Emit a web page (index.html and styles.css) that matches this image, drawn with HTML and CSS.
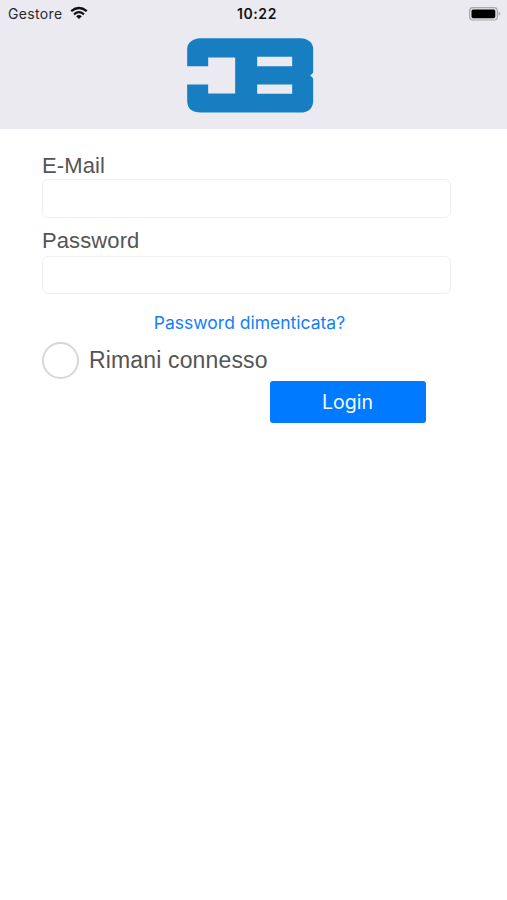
FILE: index.html
```html
<!DOCTYPE html>
<html lang="it">
<head>
<meta charset="utf-8">
<title>Login</title>
<link rel="stylesheet" href="styles.css">
</head>
<body>
<header class="header">
  <div class="status">
    <div class="carrier"><span class="carrier-name">Gestore</span>
      <svg class="wifi" width="18" height="14" viewBox="0 0 18 14" fill="none" stroke="#111" stroke-width="2.2"><path d="M1.2 5.2Q9-1.2 16.8 5.2M4 8.3Q9 4.1 14 8.3"/><path d="M6.1 10.2Q9 8 11.9 10.2L9 13Z" fill="#111" stroke="none"/></svg>
    </div>
    <span class="time">10:22</span>
    <svg class="battery" width="32" height="14" viewBox="0 0 32 14"><rect x=".6" y=".6" width="27.8" height="12.4" rx="3.2" fill="#e4e3e8" stroke="#aaa9ad" stroke-width="1.2"/><rect x="2.5" y="2.4" width="23.8" height="8.8" rx="1.6" fill="#000"/><path d="M29.7 4.8Q31.3 5.3 31.3 6.8T29.7 8.8Z" fill="#aaa9ad"/></svg>
  </div>
  <svg class="logo" width="127" height="75" viewBox="35.5 22.5 381 225"><path fill="#177fc1" fill-rule="evenodd" d="M36 107V56Q36 42 46 34Q58 23 76 23H375Q393 23 404 33Q414 42 414 56V122Q414 128 411 130L405 135L411 140Q414 142 414 148V211Q414 227 405 236Q394 246 375 246H76Q58 246 46 237Q36 228 36 211V162H99V189H180V81H99V107ZM246 79V107H351V79ZM246 162V190H351V162Z"/></svg>
</header>
<main class="form">
  <label class="label" for="email">E-Mail</label>
  <input class="field" id="email" type="email">
  <label class="label label-password" for="password">Password</label>
  <input class="field" id="password" type="password">
  <a class="forgot">Password dimenticata?</a>
  <div class="remember"><span class="radio"></span><span class="remember-text">Rimani connesso</span></div>
  <button class="login" type="button">Login</button>
</main>
</body>
</html>
```
FILE: styles.css
```css
* { box-sizing: border-box; }
body { margin: 0; background: #fff; color: #555; font-family: "Liberation Sans", Arial, sans-serif; }
.header { height: 129px; background: #ebeaf1; }
.status { display: grid; grid-template-columns: 1fr auto 1fr; align-items: center; height: 26px; padding: 0 6px 0 8px; color: #111; font-family: Inter, sans-serif; }
.carrier { display: flex; align-items: center; gap: 7px; }
.carrier-name { font-size: 14px; letter-spacing: .35px; color: #29292b; }
.wifi { margin-top: -1px; }
.time { font-size: 14px; font-weight: 600; letter-spacing: .6px; margin-left: 5px; }
.battery { justify-self: end; margin-top: 1px; }
.logo { display: block; margin: 11.5px 0 0 186.5px; }
.form { display: flex; flex-direction: column; width: 409px; margin: 24px 0 0 42px; }
.label { height: 26px; line-height: 26px; font-size: 22px; letter-spacing: .1px; }
.label-password { margin-top: 10.5px; height: 27.5px; }
.field { width: 409px; height: 38.5px; margin: 0; padding: 0 10px; border: 1px solid #efefef; border-radius: 6px; background: #fff; font-size: 22px; outline: none; }
.forgot { align-self: center; margin: 17px 0 0 6px; font: 17.5px/24px Inter, sans-serif; color: #147efb; }
.remember { display: flex; align-items: center; height: 37px; margin-top: 7px; gap: 10px; }
.radio { width: 37px; height: 37px; border: 2px solid #d8d8d8; border-radius: 50%; }
.remember-text { font-size: 23px; letter-spacing: .15px; }
.login { width: 156px; height: 42px; margin: 1.5px 0 0 227.5px; padding: 0; border: 0; border-radius: 3px; background: #007aff; color: #f5faff; font: 19.5px/42px Inter, sans-serif; }
```
